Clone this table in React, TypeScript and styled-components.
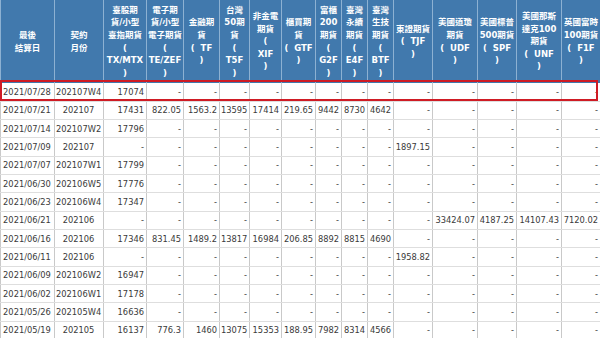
import * as React from "react";
import styled, { createGlobalStyle } from "styled-components";

const GlobalStyle = createGlobalStyle`
  html, body {
    margin: 0;
    padding: 0;
    background: #ffffff;
    overflow: hidden;
  }
`;

const Wrap = styled.div`
  position: relative;
  width: 600px;
  height: 338px;
  overflow: hidden;
`;

const Table = styled.table`
  width: 600px;
  table-layout: fixed;
  border-collapse: collapse;
  font-family: "DejaVu Sans", "Noto Sans CJK TC", sans-serif;
`;

const HeadCell = styled.th`
  height: 83px;
  padding: 0 1px;
  box-sizing: border-box;
  background: #4179ad;
  color: #ffffff;
  font-family: "DejaVu Sans", "Noto Sans CJK TC", sans-serif;
  font-size: 8.5px;
  font-weight: bold;
  line-height: 12.6px;
  text-align: center;
  vertical-align: middle;
  border-left: 1px solid #8db1d2;
  border-right: 1px solid #8db1d2;
  white-space: nowrap;
  overflow: hidden;
`;

const Row = styled.tr`
  height: 18.33px;
`;

const Cell = styled.td<{ $center?: boolean }>`
  padding: 0 2px 0 1px;
  font-size: 8.3px;
  color: #3a3a3a;
  text-align: ${(p) => (p.$center ? "center" : "right")};
  vertical-align: middle;
  white-space: nowrap;
  overflow: hidden;
  border-left: 1px solid #c9c9c9;
  border-right: 1px solid #c9c9c9;
  border-bottom: 1px solid #dedede;
`;

const Highlight = styled.div`
  position: absolute;
  left: 0;
  top: 80px;
  width: 598px;
  height: 21px;
  box-sizing: border-box;
  border: 2px solid #cf1b24;
  pointer-events: none;
`;

const widths = [54, 49, 43, 37, 36, 30, 32, 34, 26, 26, 26, 39, 45, 39, 45, 39];

const headers: string[][] = [
  ["最後", "結算日"],
  ["契約", "月份"],
  ["臺股期", "貨/小型", "臺指期貨", "(", "TX/MTX", ")"],
  ["電子期", "貨/小型", "電子期貨", "(", "TE/ZEF", ")"],
  ["金融期", "貨", "(\u00a0 TF", ")"],
  ["台灣", "50期", "貨", "(", "T5F", ")"],
  ["非金電", "期貨", "(", "XIF", ")"],
  ["櫃買期", "貨", "(\u00a0 GTF", ")"],
  ["富櫃", "200", "期貨", "(", "G2F", ")"],
  ["臺灣", "永續", "期貨", "(", "E4F", ")"],
  ["臺灣", "生技", "期貨", "(", "BTF", ")"],
  ["東證期貨", "(\u00a0 TJF", ")"],
  ["美國道瓊", "期貨", "(\u00a0 UDF", ")"],
  ["美國標普", "500期貨", "(\u00a0 SPF", ")"],
  ["美國那斯", "達克100", "期貨", "(\u00a0 UNF", ")"],
  ["英國富時", "100期貨", "(\u00a0 F1F", ")"],
];

const d = (n: number) => Array.from({ length: n }, () => "-");

const rows: string[][] = [
  ["2021/07/28", "202107W4", "17074", ...d(13)],
  ["2021/07/21", "202107", "17431", "822.05", "1563.2", "13595", "17414", "219.65", "9442", "8730", "4642", ...d(5)],
  ["2021/07/14", "202107W2", "17796", ...d(13)],
  ["2021/07/09", "202107", ...d(9), "1897.15", ...d(4)],
  ["2021/07/07", "202107W1", "17799", ...d(13)],
  ["2021/06/30", "202106W5", "17776", ...d(13)],
  ["2021/06/23", "202106W4", "17347", ...d(13)],
  ["2021/06/21", "202106", ...d(10), "33424.07", "4187.25", "14107.43", "7120.02"],
  ["2021/06/16", "202106", "17346", "831.45", "1489.2", "13817", "16984", "206.85", "8892", "8815", "4690", ...d(5)],
  ["2021/06/11", "202106", ...d(9), "1958.82", ...d(4)],
  ["2021/06/09", "202106W2", "16947", ...d(13)],
  ["2021/06/02", "202106W1", "17178", ...d(13)],
  ["2021/05/26", "202105W4", "16636", ...d(13)],
  ["2021/05/19", "202105", "16137", "776.3", "1460", "13075", "15353", "188.95", "7982", "8314", "4566", ...d(5)],
];

export default function App() {
  return (
    <Wrap>
      <GlobalStyle />
      <Table>
        <colgroup>
          {widths.map((w, i) => (
            <col key={i} style={{ width: w }} />
          ))}
        </colgroup>
        <thead>
          <tr>
            {headers.map((lines, i) => (
              <HeadCell key={i}>
                {lines.map((l, j) => (
                  <React.Fragment key={j}>
                    {j > 0 && <br />}
                    {l}
                  </React.Fragment>
                ))}
              </HeadCell>
            ))}
          </tr>
        </thead>
        <tbody>
          {rows.map((r, i) => (
            <Row key={i}>
              {r.map((v, j) => (
                <Cell key={j} $center={j < 2}>
                  {v}
                </Cell>
              ))}
            </Row>
          ))}
        </tbody>
      </Table>
      <Highlight />
    </Wrap>
  );
}
